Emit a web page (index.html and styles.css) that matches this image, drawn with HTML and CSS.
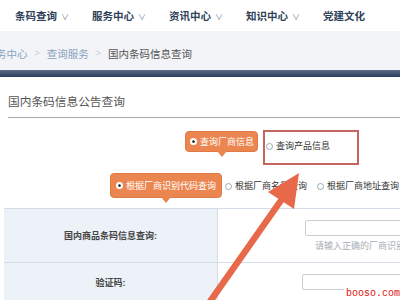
FILE: index.html
```html
<!doctype html>
<html lang="zh-CN">
  <head>
    <meta charset="UTF-8" />
    <meta name="viewport" content="width=device-width, initial-scale=1.0" />
    <title>国内条码信息公告查询</title>
    <link rel="stylesheet" href="styles.css">
  </head>
  <body>
    <nav class="nav">
      <a class="nav-item">条码查询 <span class="chev">∨</span></a>
      <a class="nav-item">服务中心 <span class="chev">∨</span></a>
      <a class="nav-item">资讯中心 <span class="chev">∨</span></a>
      <a class="nav-item">知识中心 <span class="chev">∨</span></a>
      <a class="nav-item">党建文化</a>
    </nav>

    <div class="crumbs">
      <span class="crumb first">务中心</span>
      <span class="sep">&gt;</span>
      <span class="crumb">查询服务</span>
      <span class="sep">&gt;</span>
      <span class="current">国内条码信息查询</span>
    </div>
    <div class="bar"></div>

    <div class="page">
      <h2 class="title">国内条码信息公告查询</h2>

      <div class="options">
        <div class="opt-row first-row">
          <span class="tab"><i class="dot"></i>查询厂商信息</span>
          <span class="marked"><i class="ring"></i>查询产品信息</span>
        </div>
        <div class="opt-row second-row">
          <span class="tab big"><i class="dot"></i>根据厂商识别代码查询</span>
          <span class="radio"><i class="ring"></i>根据厂商名称查询</span>
          <span class="radio"><i class="ring"></i>根据厂商地址查询</span>
        </div>
      </div>

      <div class="form">
        <div class="label">国内商品条码信息查询:</div>
        <div class="field">
          <div class="input"></div>
          <div class="hint">请输入正确的厂商识别代码</div>
        </div>
        <div class="label">验证码:</div>
        <div class="field second">
          <div class="input"></div>
        </div>
      </div>
    </div>

    <!-- annotation arrow drawn over the page -->
    <svg class="arrow" width="400" height="300" viewBox="0 0 400 300">
      <line x1="209" y1="303" x2="282" y2="199" stroke="#e8694a" stroke-width="6.5" />
      <polygon points="299,173 268,192 294,209" fill="#e8694a" />
    </svg>

    <div class="mark">booso.com</div>
  </body>
</html>
```

FILE: styles.css
```css
* {
  margin: 0;
  padding: 0;
  box-sizing: border-box;
}

body {
  font-family: "Liberation Sans", "Noto Sans CJK SC", sans-serif;
  background: #fff;
  color: #333;
  width: 400px;
  height: 300px;
  overflow: hidden;
  position: relative;
}

.nav {
  height: 31px;
  display: flex;
  align-items: center;
  padding-left: 15px;
}

.nav-item {
  width: 85px;
  font-size: 10.5px;
  font-weight: 700;
  color: #2f3f58;
  white-space: nowrap;
}

.chev {
  font-weight: 400;
  color: #7a8aa2;
  font-size: 8px;
  margin-left: 1px;
}

.crumbs {
  height: 39px;
  background: #f2f4f7;
  display: flex;
  align-items: center;
  padding-top: 5px;
  font-size: 10.5px;
  white-space: nowrap;
}

.crumb {
  color: #8aa2be;
}

.crumb.first {
  margin-left: -4px;
}

.sep {
  color: #c3cbd6;
  margin: 0 7px;
  font-size: 9px;
}

.current {
  color: #555;
}

.bar {
  height: 7px;
  background: linear-gradient(#5a6c86, #2c3e5c);
}

.page {
  padding-left: 4px;
}

.title {
  margin-left: 4px;
  height: 41px;
  padding-top: 15px;
  font-size: 11.7px;
  font-weight: 400;
  color: #555;
  border-bottom: 1px solid #a9a9a9;
}

.options {
  height: 90px;
  padding-top: 12px;
  font-size: 9px;
}

.opt-row {
  display: flex;
  align-items: flex-start;
  white-space: nowrap;
}

.first-row {
  margin-left: 181px;
}

.second-row {
  margin-left: 106px;
  margin-top: 8px;
  align-items: center;
}

.tab {
  position: relative;
  display: flex;
  align-items: center;
  height: 21px;
  margin-top: 1px;
  padding: 0 3px 0 4px;
  background: #eb8650;
  border: 1px solid #e07a45;
  border-radius: 4px;
  color: #fff;
}

.tab.big {
  height: 25px;
  margin-top: 0;
  padding: 0 5px 0 5px;
}

.tab::after {
  content: "";
  position: absolute;
  left: 50%;
  bottom: -6px;
  margin-left: -5px;
  border-left: 5px solid transparent;
  border-right: 5px solid transparent;
  border-top: 6px solid #eb8650;
}

.dot {
  width: 7px;
  height: 7px;
  border-radius: 50%;
  background: #fff;
  border: 2px solid #fff;
  box-shadow: inset 0 0 0 4px #222;
  margin-right: 3px;
}

.ring {
  display: inline-block;
  width: 7px;
  height: 7px;
  border-radius: 50%;
  border: 1px solid #9aa;
  background: #fff;
  margin-right: 3px;
  vertical-align: -1px;
}

.marked {
  width: 96px;
  height: 35px;
  margin-left: 5px;
  padding: 7px 0 0 1px;
  border: 2px solid #c5665e;
  color: #333;
}

.radio {
  margin-left: 3px;
  margin-right: 7px;
  color: #333;
}

.form {
  display: grid;
  grid-template-columns: 214px 1fr;
  grid-template-rows: 54px 40px;
  border-top: 1px solid #d4dce7;
}

.label {
  background: #edf2f8;
  border-right: 1px solid #d4dce7;
  border-bottom: 1px solid #d4dce7;
  display: flex;
  align-items: center;
  justify-content: center;
  font-size: 9px;
  font-weight: 700;
  color: #444;
}

.field {
  border-bottom: 1px solid #d4dce7;
  padding: 11px 0 0 87px;
  white-space: nowrap;
  overflow: hidden;
}

.field.second {
  padding: 11px 0 0 84px;
}

.input {
  width: 140px;
  height: 16px;
  border: 1px solid #c9ced6;
  border-radius: 2px;
  background: #fff;
}

.hint {
  margin: 3px 0 0 10px;
  font-size: 9px;
  color: #a7adb5;
}

.arrow {
  position: absolute;
  left: 0;
  top: 0;
}

.mark {
  position: absolute;
  right: 0;
  bottom: 1px;
  font-family: "Liberation Mono", monospace;
  font-size: 10px;
  color: #e01010;
  background: #fff;
  padding-left: 2px;
}
```
